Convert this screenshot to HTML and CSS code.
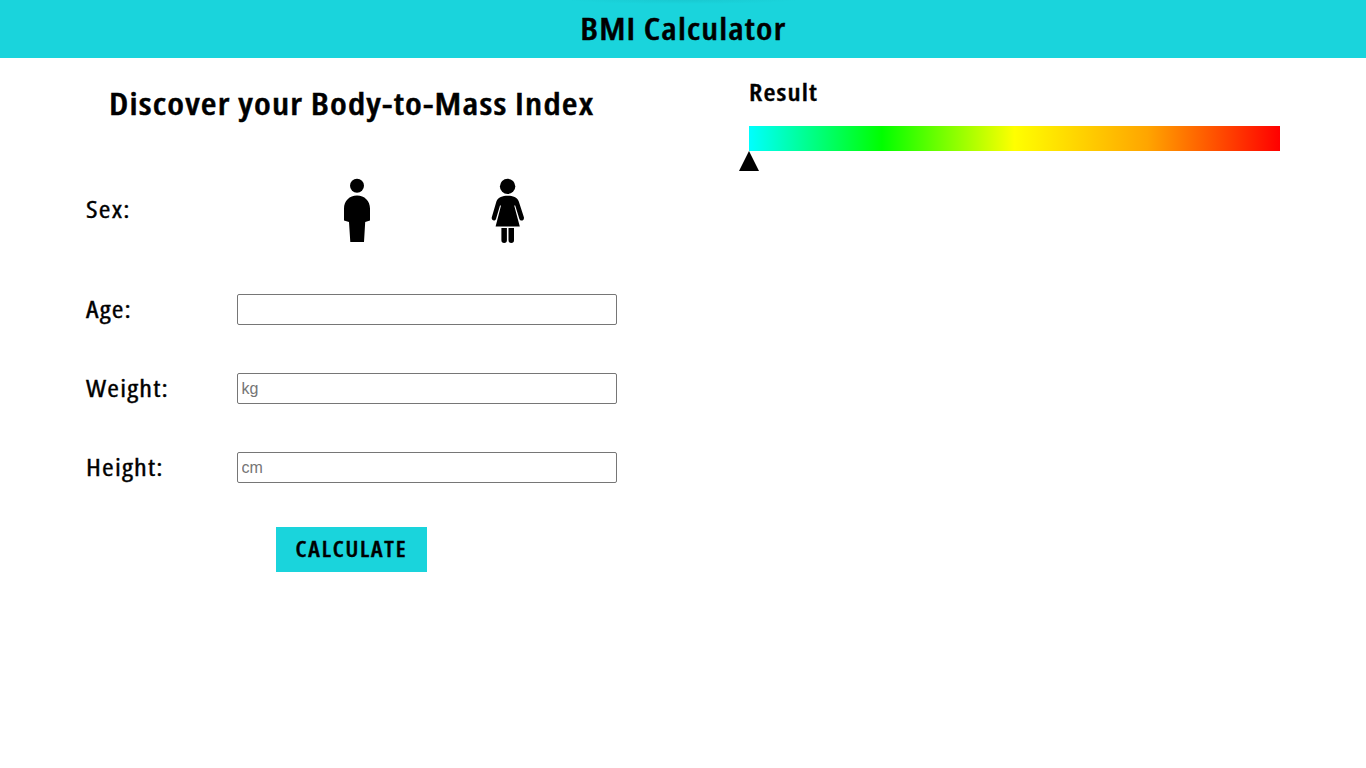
FILE: index.html
```html
<!DOCTYPE html>
<html lang="en">
<head>
<meta charset="utf-8">
<title>BMI Calculator</title>
<link rel="stylesheet" href="styles.css">
</head>
<body>
<header class="header"><h1 class="title">BMI Calculator</h1></header>
<main class="main">
  <form class="form">
    <h2 class="heading">Discover your Body-to-Mass Index</h2>
    <div class="row row-sex">
      <span class="label sex">Sex:</span>
      <div class="sexes">
        <svg class="person" width="60" height="80" viewBox="0 0 60 80">
          <circle cx="27" cy="15.8" r="7"/>
          <path d="M14 38.5C14 31 19.5 25.6 27 25.6S40 31 40 38.5V50.5L35.2 52L34 72H20.3L19 52L14 50.5Z"/>
        </svg>
        <svg class="person" width="60" height="80" viewBox="0 0 60 80">
          <circle cx="27.6" cy="16.4" r="7.7"/>
          <path d="M27.6 25.8C32.5 25.8 37.2 27.2 38.8 31.5L43.9 47.2C44.5 50.8 40.5 51.8 39.4 49L35.2 35.5H34.2L39.8 56.6H15.6L21 35.5H20L16 49C14.8 51.8 11 50.6 11.8 47.2L16.4 31.5C18 27.2 22.7 25.8 27.6 25.8Z"/>
          <path d="M21.4 58H26.9V70.3A2.75 2.75 0 0 1 21.4 70.3ZM28.5 58H34V70.3A2.75 2.75 0 0 1 28.5 70.3Z"/>
        </svg>
      </div>
    </div>
    <div class="row"><label class="label" for="age">Age:</label><input class="input" id="age" type="text"></div>
    <div class="row"><label class="label" for="weight">Weight:</label><input class="input" id="weight" type="text" placeholder="kg"></div>
    <div class="row"><label class="label" for="height">Height:</label><input class="input" id="height" type="text" placeholder="cm"></div>
    <button class="button" type="button"><span class="button-text">CALCULATE</span></button>
  </form>
  <section class="result">
    <h3 class="result-title">Result</h3>
    <div class="scale"></div>
    <div class="pointer"></div>
  </section>
</main>
</body>
</html>
```
FILE: styles.css
```css
* { box-sizing: border-box; margin: 0; padding: 0; }
body { background: #fff; color: #000; font-family: "Open Sans", "Noto Sans", sans-serif; font-stretch: 75%; letter-spacing: 1px; }
.header { height: 58px; background: radial-gradient(ellipse 115px 4px at center top, #19c9d1, #1ad4dc) center top / 230px 4px no-repeat #1ad4dc; }
.title { width: fit-content; margin: 0 auto; font-size: 31px; font-weight: 600; line-height: 57px; white-space: nowrap; transform: scaleX(1.14); -webkit-text-stroke: 0.5px #000; }
.main { display: grid; grid-template-columns: 531px 531px; column-gap: 132px; padding-left: 86px; }
.form { display: flex; flex-direction: column; }
.heading { align-self: center; height: 92px; font-size: 31px; font-weight: 600; line-height: 91px; white-space: nowrap; transform: scaleX(1.163); -webkit-text-stroke: 0.5px #000; }
.row { display: grid; grid-template-columns: 151px 380px; align-items: center; height: 79px; }
.row-sex { height: 120px; align-items: start; padding-top: 20px; }
.label { justify-self: start; font-size: 23.5px; font-weight: 400; line-height: 32px; white-space: nowrap; margin-top: -2px; transform: scaleX(1.2); transform-origin: left; -webkit-text-stroke: 0.35px #000; }
.sex { margin-top: 23px; }
.sexes { display: flex; gap: 90px; padding-left: 93px; }
.person { display: block; }
.input { width: 380px; height: 31px; border: 1px solid #767676; border-radius: 2px; padding: 1px 3px 1px 3.5px; font: 16px "Liberation Sans", sans-serif; }
.input::placeholder { color: #757575; }
.button { align-self: center; margin-top: 20px; padding-bottom: 2px; width: 151px; height: 45px; border: 0; background: #1ad4dc; font: 600 21px "Open Sans", sans-serif; font-stretch: 75%; letter-spacing: 1.6px; color: #000; }
.button-text { display: inline-block; transform: scaleX(1.13); -webkit-text-stroke: 0.4px #000; }
.result-title { width: fit-content; height: 68px; line-height: 68px; font-size: 23.5px; font-weight: 600; transform: scaleX(1.17); transform-origin: left; -webkit-text-stroke: 0.4px #000; }
.scale { height: 25px; background: linear-gradient(90deg, #0ff, #0f0, #ff0, orange, #f00); }
.pointer { width: 20px; height: 20px; margin-left: -10px; background: #000; clip-path: polygon(50% 0, 100% 100%, 0 100%); }
```
